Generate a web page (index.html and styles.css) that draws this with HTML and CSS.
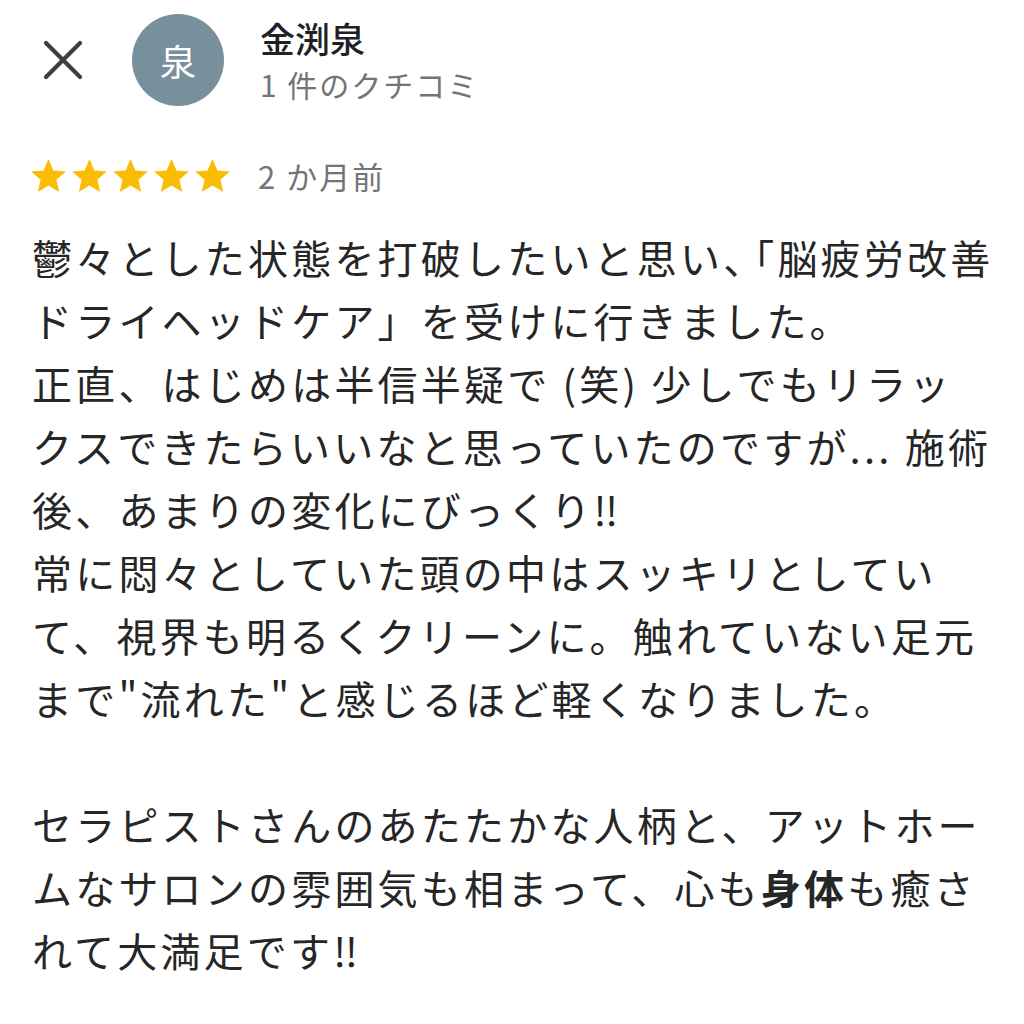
FILE: index.html
```html
<!DOCTYPE html>
<html lang="ja">
<head>
<meta charset="utf-8">
<link rel="stylesheet" href="styles.css">
</head>
<body>
<div class="review">
  <div class="header">
    <svg class="close" viewBox="0 0 40 40" width="40" height="40"><path d="M3 3 L37 37 M37 3 L3 37" stroke="#3c4043" stroke-width="4.2" stroke-linecap="round" fill="none"/></svg>
    <div class="avatar">泉</div>
    <div class="info">
      <div class="name">金渕泉</div>
      <div class="count">1 件のクチコミ</div>
    </div>
  </div>
  <div class="meta">
    <div class="stars">
      <svg viewBox="2 2 20 19" width="35" height="33"><path d="M12 17.27L18.18 21l-1.64-7.03L22 9.24l-7.19-.61L12 2 9.19 8.63 2 9.24l5.46 4.73L5.82 21z"/></svg>
      <svg viewBox="2 2 20 19" width="35" height="33"><path d="M12 17.27L18.18 21l-1.64-7.03L22 9.24l-7.19-.61L12 2 9.19 8.63 2 9.24l5.46 4.73L5.82 21z"/></svg>
      <svg viewBox="2 2 20 19" width="35" height="33"><path d="M12 17.27L18.18 21l-1.64-7.03L22 9.24l-7.19-.61L12 2 9.19 8.63 2 9.24l5.46 4.73L5.82 21z"/></svg>
      <svg viewBox="2 2 20 19" width="35" height="33"><path d="M12 17.27L18.18 21l-1.64-7.03L22 9.24l-7.19-.61L12 2 9.19 8.63 2 9.24l5.46 4.73L5.82 21z"/></svg>
      <svg viewBox="2 2 20 19" width="35" height="33"><path d="M12 17.27L18.18 21l-1.64-7.03L22 9.24l-7.19-.61L12 2 9.19 8.63 2 9.24l5.46 4.73L5.82 21z"/></svg>
    </div>
    <span class="date">2 か月前</span>
  </div>
  <p class="text">鬱々とした状態を打破したいと思い<span class="trim">、</span>「脳疲労改善<br>ドライヘッドケア」を受けに行きました。<br>正直、はじめは半信半疑で (笑) 少しでもリラッ<br>クスできたらいいなと思っていたのですが... 施術<br>後、あまりの変化にびっくり‼<br>常に悶々としていた頭の中はスッキリとしてい<br>て、視界も明るくクリーンに。触れていない足元<br>まで"流れた"と感じるほど軽くなりました。<br><br>セラピストさんのあたたかな人柄と、アットホー<br>ムなサロンの雰囲気も相まって、心も<b>身体</b>も癒さ<br>れて大満足です‼</p>
</div>
</body>
</html>
```
FILE: styles.css
```css
html, body {
  margin: 0;
  padding: 0;
  background: #ffffff;
}
body {
  font-family: "Noto Sans CJK JP", "Noto Sans", sans-serif;
  color: #222222;
}
.review {
  width: 1024px;
  height: 1024px;
  overflow: hidden;
}
.header {
  display: flex;
  align-items: center;
  padding: 14px 0 0 43px;
  height: 92px;
}
.close {
  flex: none;
  margin-right: 49px;
}
.avatar {
  flex: none;
  width: 92px;
  height: 92px;
  border-radius: 50%;
  background: #78909c;
  color: #ffffff;
  font-size: 36px;
  display: flex;
  align-items: center;
  justify-content: center;
  margin-right: 36px;
}
.info {
  display: flex;
  flex-direction: column;
  margin-top: 2px;
}
.name {
  font-size: 35px;
  font-weight: 500;
  line-height: 46px;
  color: #202124;
}
.count {
  font-size: 30px;
  line-height: 46px;
  color: #70757a;
  letter-spacing: 2px;
}
.meta {
  display: flex;
  align-items: center;
  padding: 49px 0 0 31px;
  height: 40px;
}
.stars {
  display: flex;
  gap: 6px;
  fill: #fbbc04;
}
.stars svg {
  display: block;
}
.date {
  margin-left: 28px;
  font-size: 31px;
  color: #70757a;
  letter-spacing: 2px;
}
.text {
  margin: 31px 0 0 32px;
  font-size: 40px;
  line-height: 63px;
  letter-spacing: 3.2px;
  white-space: nowrap;
  color: #262626;
}
.text .trim {
  letter-spacing: -9px;
}
.text b {
  font-weight: 700;
}
```
